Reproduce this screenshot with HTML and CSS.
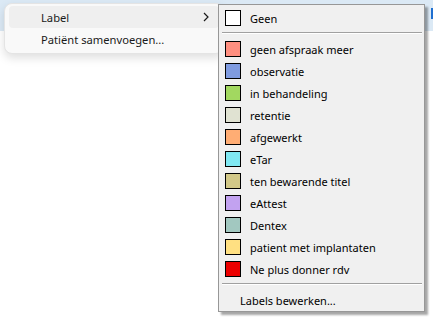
FILE: index.html
```html
<!DOCTYPE html>
<html>
<head>
<meta charset="utf-8">
<link rel="stylesheet" href="styles.css">
</head>
<body>
<div class="screen">
  <div class="band"><span class="link"></span></div>

  <div class="menu">
    <div class="mitem hot"><span class="mlabel">Label</span>
      <svg class="chev" width="6" height="10" viewBox="0 0 6 10"><path d="M1 1 L5 5 L1 9" fill="none" stroke="#1a1a1a" stroke-width="1.2"/></svg>
    </div>
    <div class="mitem"><span class="mlabel">Patiënt samenvoegen...</span></div>
  </div>

  <div class="sub">
    <div class="row"><span class="sw" style="background:#ffffff"></span><span>Geen</span></div>
    <div class="sep"></div>
    <div class="row"><span class="sw" style="background:#ff8f80"></span><span>geen afspraak meer</span></div>
    <div class="row"><span class="sw" style="background:#7f9be0"></span><span>observatie</span></div>
    <div class="row"><span class="sw" style="background:#a2d860"></span><span>in behandeling</span></div>
    <div class="row"><span class="sw" style="background:#e0e2d2"></span><span>retentie</span></div>
    <div class="row"><span class="sw" style="background:#ffad74"></span><span>afgewerkt</span></div>
    <div class="row"><span class="sw" style="background:#80e8f2"></span><span>eTar</span></div>
    <div class="row"><span class="sw" style="background:#d2c888"></span><span>ten bewarende titel</span></div>
    <div class="row"><span class="sw" style="background:#c2a2f0"></span><span>eAttest</span></div>
    <div class="row"><span class="sw" style="background:#a2c8c0"></span><span>Dentex</span></div>
    <div class="row"><span class="sw" style="background:#ffe082"></span><span>patient met implantaten</span></div>
    <div class="row"><span class="sw" style="background:#ec0000"></span><span>Ne plus donner rdv</span></div>
    <div class="sep"></div>
    <div class="row plain"><span>Labels bewerken...</span></div>
  </div>
</div>
</body>
</html>
```
FILE: styles.css
```css
html, body {
  margin: 0;
  padding: 0;
}
body {
  width: 433px;
  height: 319px;
  overflow: hidden;
  background: #ffffff;
  font-family: "Segoe UI", "Noto Sans", "Liberation Sans", sans-serif;
  font-size: 11px;
  color: #000;
}
.screen {
  position: relative;
  width: 433px;
  height: 319px;
}
.band {
  height: 31px;
  background: #dbe9f5;
  position: relative;
}
.link {
  position: absolute;
  left: 431px;
  top: 8px;
  width: 4px;
  height: 11px;
  border-left: 2px solid #1f6fd0;
  border-bottom: 2px solid #1f6fd0;
  box-sizing: border-box;
}
.menu {
  position: absolute;
  left: 4px;
  top: 3px;
  width: 220px;
  height: 51px;
  box-sizing: border-box;
  background: #f9f9f9;
  border: 1px solid #e4e4e4;
  border-radius: 8px;
  box-shadow: 0 4px 10px rgba(0,0,0,0.13);
  padding: 2px 4px;
  display: flex;
  flex-direction: column;
  font-size: 11.2px;
}
.mitem {
  height: 22px;
  display: flex;
  align-items: center;
  padding-left: 32px;
  padding-right: 8px;
  border-radius: 4px;
  color: #1a1a1a;
  position: relative;
}
.mitem.hot {
  background: #efefef;
}
.mlabel {
  flex: 1;
}
.chev {
  margin-right: 2px;
}
.sub {
  position: absolute;
  left: 218px;
  top: 4px;
  width: 207px;
  height: 308px;
  box-sizing: border-box;
  background: #f0f0f0;
  border: 1px solid #979797;
  box-shadow: 3px 3px 2px rgba(0,0,0,0.35);
  padding: 2px;
  display: flex;
  flex-direction: column;
}
.row {
  height: 22px;
  display: flex;
  align-items: center;
  padding-left: 4px;
  flex: none;
}
.sw {
  width: 16px;
  height: 16px;
  box-sizing: border-box;
  border: 1px solid #000;
  margin-right: 9px;
  flex: none;
}
.row.plain {
  padding-left: 19px;
}
.sep {
  flex: none;
  margin: 3px 0 4px 1px;
  height: 1px;
  background: #a0a0a0;
  border-bottom: 1px solid #ffffff;
}
```
